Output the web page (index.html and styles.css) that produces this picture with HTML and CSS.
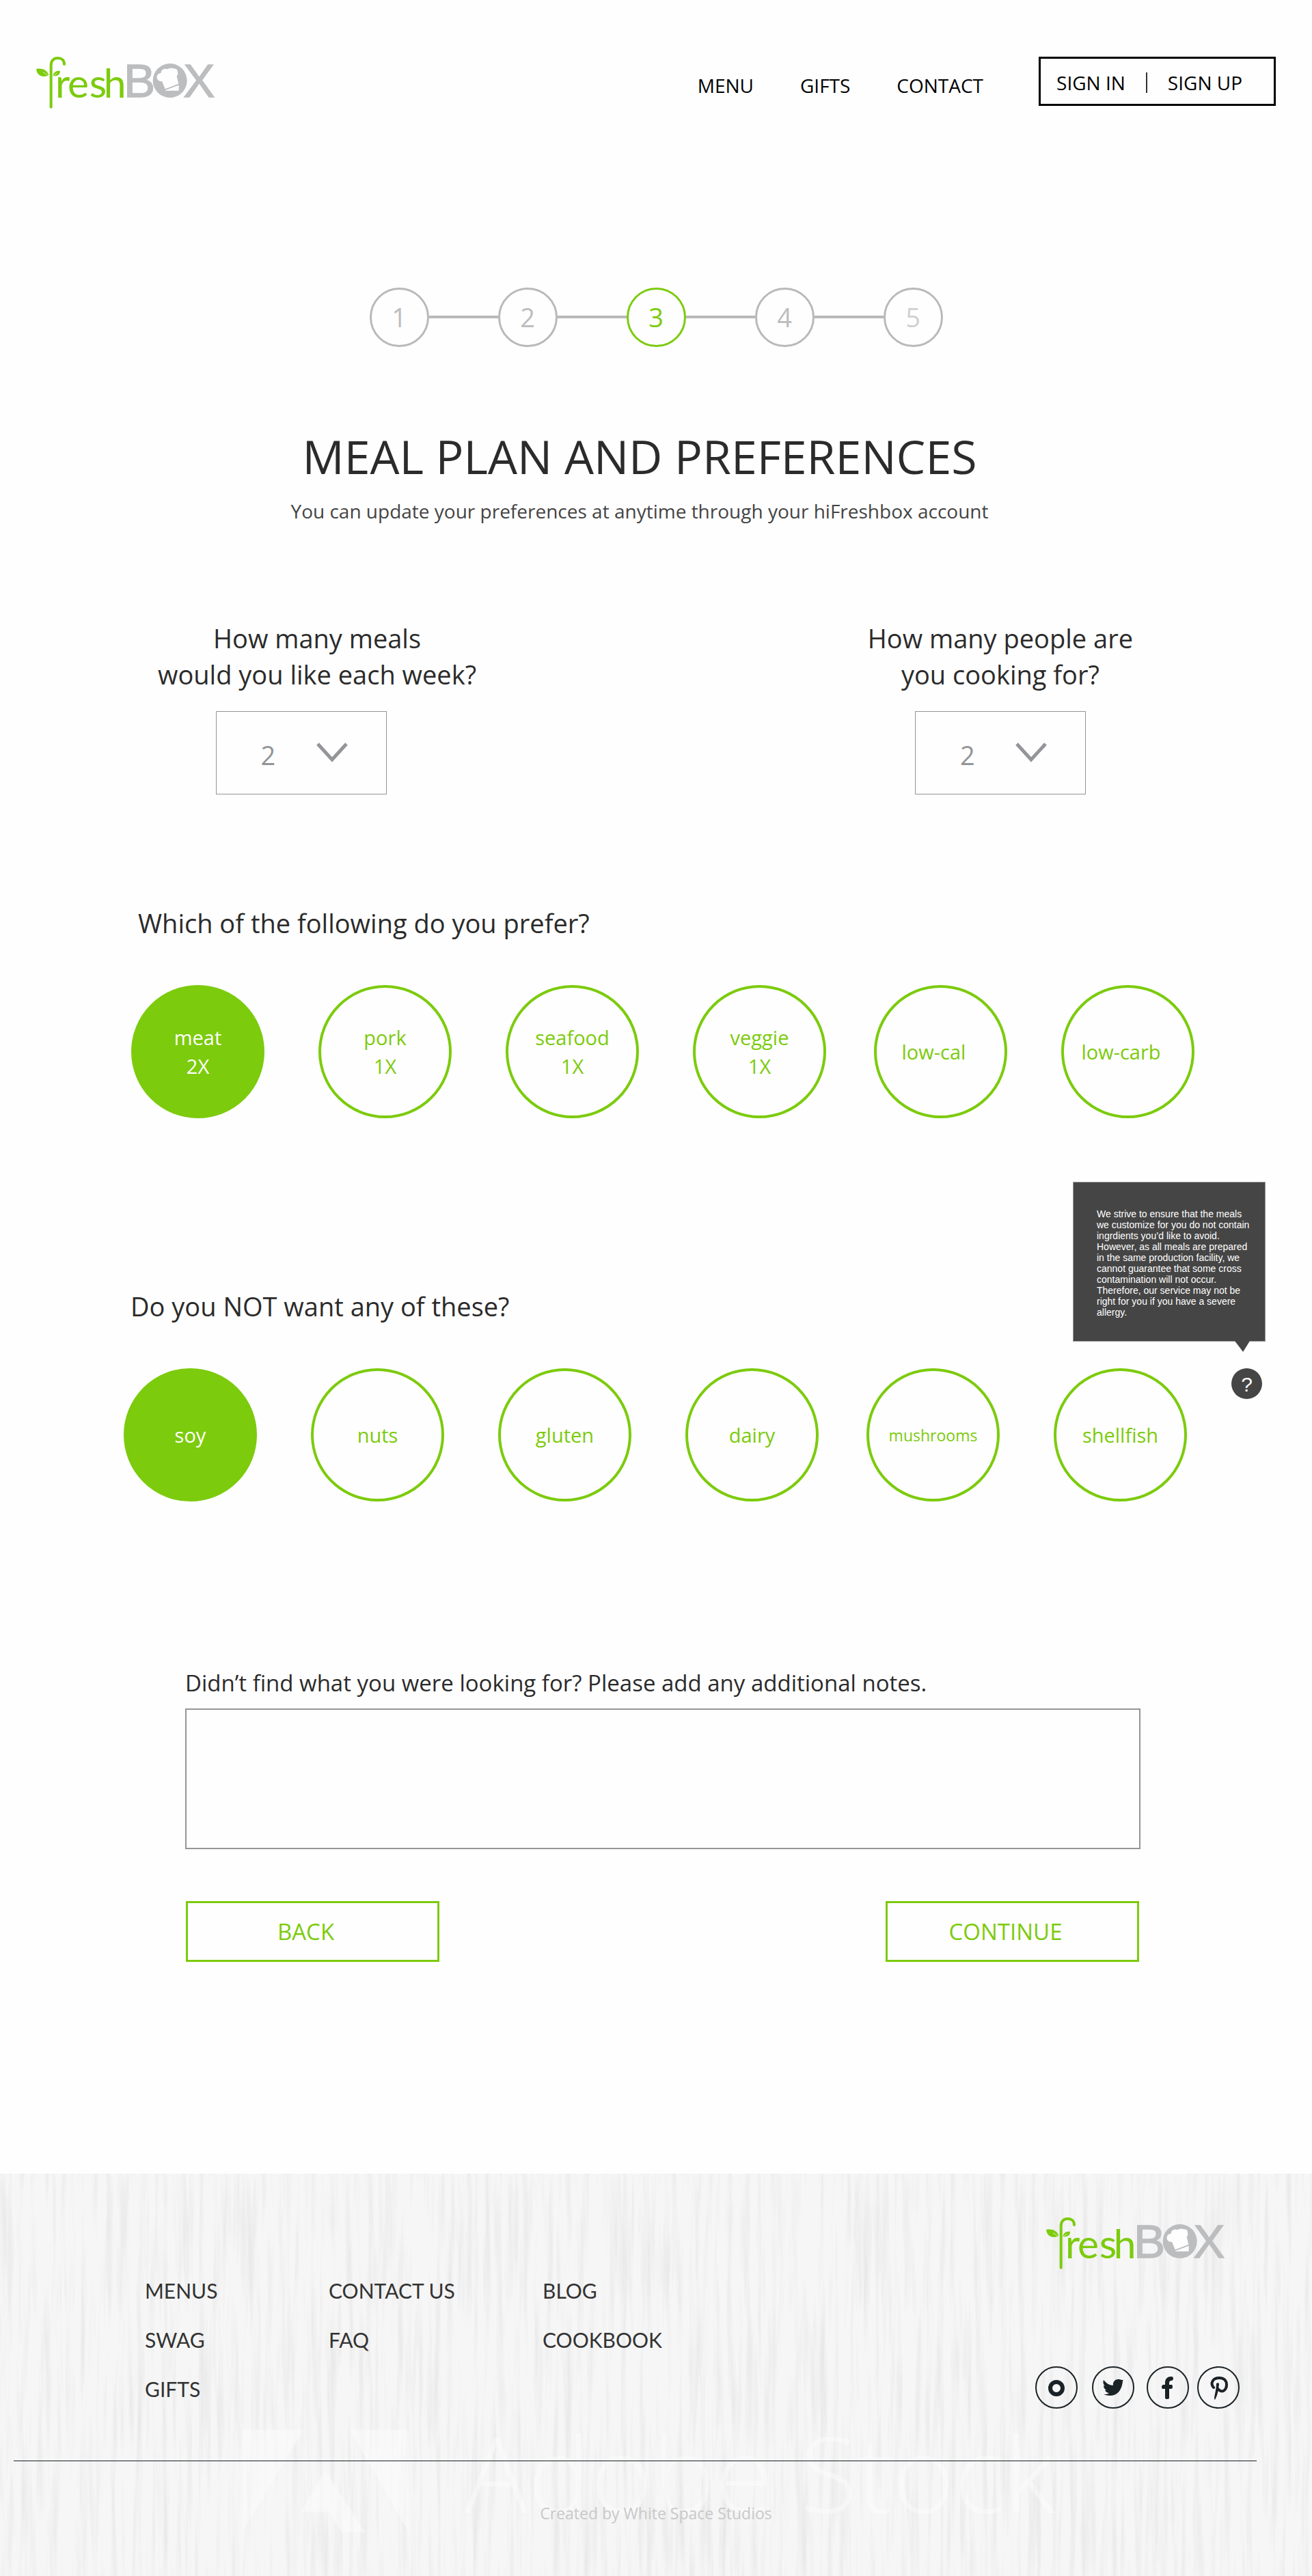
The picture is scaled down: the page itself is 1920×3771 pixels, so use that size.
FILE: index.html
```html
<!DOCTYPE html>
<html lang="en">
<head>
<meta charset="utf-8">
<meta name="viewport" content="width=device-width, initial-scale=1">
<title>freshBOX – Meal plan and preferences</title>
<link rel="stylesheet" href="styles.css">
</head>
<body>

<svg class="sprite" aria-hidden="true">
  <symbol id="logo" viewBox="0 -24 792 252">
    <!-- stem and leaves -->
    <path class="logo-stem" d="M65 221V38C65 16 78 6 95 6C111 6 123 15 123 33"/>
    <path class="logo-leaf" d="M0 54C25 49 49 58 55 82C34 91 5 90 0 54Z"/>
    <path class="logo-leaf" d="M105 63C90 60 74 68 74 84C90 88 105 80 105 63Z"/>
    <path class="logo-vein" d="M30 68L54 84M92 72L76 84"/>
    <text class="logo-fresh" x="84 138 233 296" y="181">resh</text>
    <text class="logo-box" x="384" y="178">B</text>
    <!-- chef hat badge -->
    <circle class="logo-badge" cx="587" cy="105" r="75"/>
    <path class="logo-hat" d="M530 94C528 80 537 72 548 72C548 56 562 50 576 55C588 49 600 50 606 53C617 51 622 60 621 69C625 76 618 84 617 86L625 119L566 142L552 107C540 110 532 103 530 94Z"/>
    <path class="logo-hat" d="M626 125V149H567V147Z"/>
    <text class="logo-box" x="646" y="178">X</text>
  </symbol>
</svg>

<header class="site-header">
  <a class="logo" href="#" aria-label="freshBOX home"><svg><use href="#logo"/></svg></a>
  <nav class="main-nav">
    <a href="#">MENU</a>
    <a href="#">GIFTS</a>
    <a href="#">CONTACT</a>
  </nav>
  <div class="auth">
    <a href="#">SIGN IN</a>
    <span class="auth-divider"></span>
    <a href="#">SIGN UP</a>
  </div>
</header>

<main>
  <ol class="steps">
    <li>1</li>
    <li>2</li>
    <li class="current" aria-current="step">3</li>
    <li>4</li>
    <li class="last">5</li>
  </ol>

  <div class="intro">
    <h1>MEAL PLAN AND PREFERENCES</h1>
    <p>You can update your preferences at anytime through your hiFreshbox account</p>
  </div>

  <form>
    <div class="counts">
      <div class="count meals">
        <label for="meals">How many meals<br>would you like each week?</label>
        <div class="picker">
          <select id="meals"><option>2</option><option>3</option><option>4</option></select>
          <svg viewBox="0 0 46 30" aria-hidden="true"><path d="M2 2L23 25L44 2"/></svg>
        </div>
      </div>
      <div class="count">
        <label for="people">How many people are<br>you cooking for?</label>
        <div class="picker">
          <select id="people"><option>2</option><option>4</option></select>
          <svg viewBox="0 0 46 30" aria-hidden="true"><path d="M2 2L23 25L44 2"/></svg>
        </div>
      </div>
    </div>

    <fieldset class="prefer">
      <legend>Which of the following do you prefer?</legend>
      <div class="choices">
        <div class="group">
          <label class="choice"><input type="checkbox" checked><span>meat<br>2X</span></label>
          <label class="choice"><input type="checkbox"><span>pork<br>1X</span></label>
          <label class="choice"><input type="checkbox"><span>seafood<br>1X</span></label>
          <label class="choice"><input type="checkbox"><span>veggie<br>1X</span></label>
        </div>
        <div class="group diet">
          <label class="choice"><input type="checkbox"><span>low-cal</span></label>
          <label class="choice"><input type="checkbox"><span>low-carb</span></label>
        </div>
      </div>
    </fieldset>

    <fieldset class="avoid">
      <legend>Do you NOT want any of these?</legend>
      <div class="choices">
        <div class="group">
          <label class="choice"><input type="checkbox" checked><span>soy</span></label>
          <label class="choice"><input type="checkbox"><span>nuts</span></label>
          <label class="choice"><input type="checkbox"><span>gluten</span></label>
          <label class="choice"><input type="checkbox"><span>dairy</span></label>
        </div>
        <div class="group">
          <label class="choice small"><input type="checkbox"><span>mushrooms</span></label>
          <label class="choice"><input type="checkbox"><span>shellfish</span></label>
        </div>
        <div class="help">
          <button type="button" aria-describedby="allergy-note">?</button>
          <p class="tooltip" id="allergy-note" role="tooltip">We strive to ensure that the meals we customize for you do not contain ingrdients you’d like to avoid. However, as all meals are prepared in the same production facility, we cannot guarantee that some cross contamination will not occur. Therefore, our service may not be right for you if you have a severe allergy.</p>
        </div>
      </div>
    </fieldset>

    <div class="notes">
      <label for="notes">Didn’t find what you were looking for? Please add any additional notes.</label>
      <textarea id="notes"></textarea>
      <div class="actions">
        <button type="button">BACK</button>
        <button type="submit">CONTINUE</button>
      </div>
    </div>
  </form>
</main>

<footer class="site-footer">
  <svg class="wood" aria-hidden="true">
    <filter id="grain" x="0" y="0" width="100%" height="100%" color-interpolation-filters="sRGB">
      <feTurbulence type="fractalNoise" baseFrequency="0.11 0.005" numOctaves="4" seed="8"/>
      <feColorMatrix values="0 0 0 0 0.4  0 0 0 0 0.4  0 0 0 0 0.4  0.22 0 0 0 -0.1"/>
    </filter>
    <rect width="100%" height="100%" filter="url(#grain)"/>
    <g class="watermark">
      <path d="M355 375H444L355 524ZM512 375H598V524ZM476 434L534 525H500L482 495H440Z"/>
      <text x="680" y="497">Adobe Stock</text>
    </g>
  </svg>
  <div class="footer-main">
    <nav class="footer-nav">
      <ul>
        <li><a href="#">MENUS</a></li>
        <li><a href="#">SWAG</a></li>
        <li><a href="#">GIFTS</a></li>
      </ul>
      <ul>
        <li><a href="#">CONTACT US</a></li>
        <li><a href="#">FAQ</a></li>
      </ul>
      <ul>
        <li><a href="#">BLOG</a></li>
        <li><a href="#">COOKBOOK</a></li>
      </ul>
    </nav>
    <div class="footer-side">
      <a class="logo" href="#" aria-label="freshBOX home"><svg><use href="#logo"/></svg></a>
      <div class="social">
        <a href="#" aria-label="Instagram"><svg viewBox="0 0 62 62"><circle class="ring" cx="31" cy="31" r="30"/><circle class="lens" cx="31" cy="32" r="9"/></svg></a>
        <a href="#" aria-label="Twitter"><svg viewBox="0 0 62 62"><circle class="ring" cx="31" cy="31" r="30"/><path d="M17 20C21 25 26 28 31 28C30 23 34 19 38 19C40 19 42 19 43 20L46 20C45 21 45 21 45 22C44 33 38 43 27 43C23 43 20 42 17 41C20 41 23 41 25 39C22 39 20 37 19 35H21C18 33 17 31 17 28L19 29C16 26 16 23 17 20Z"/></svg></a>
        <a href="#" aria-label="Facebook"><svg viewBox="0 0 62 62"><circle class="ring" cx="31" cy="31" r="30"/><path d="M27 46V33H23Q22 33 22 30Q22 28 24 27H27V24C27 18 31 15 36 15Q39 15 39 18Q39 20 37 21C34 21 33 22 33 25V27H37Q38 28 38 30Q38 33 36 33H33V46Q33 48 30 48Q27 48 27 46Z"/></svg></a>
        <a href="#" aria-label="Pinterest"><svg viewBox="0 0 62 62"><circle class="ring" cx="31" cy="31" r="30"/><path class="pin" d="M24 31C19 26 22 17 32 17C39 17 43 21 43 27C43 34 38 38 34 36C32 35 31 34 30 33"/><path d="M28 25Q32 23 32 26C31 35 30 42 26 49Q25 49 25 46C26 39 28 33 28 25Z"/></svg></a>
      </div>
    </div>
  </div>
  <hr>
  <p class="credit">Created by White Space Studios</p>
</footer>

</body>
</html>
```

FILE: styles.css
```css
:root {
  --green: #7ccb0d;
  --ink: #2b2b2b;
  --grey: #939598;
  --line: #b9b9b9;
  --dark: #454545;
  --night: #1a2226;
}

* { box-sizing: border-box; }

body {
  margin: 0;
  background: #fefefe;
  color: var(--ink);
  font-family: "Segoe UI", "Open Sans", "Noto Sans", sans-serif;
}

a { color: inherit; text-decoration: none; }
button, select, textarea { font: inherit; }
.sprite { position: absolute; width: 0; height: 0; }

/* Logo */
.logo { display: block; flex: none; width: 264px; height: 84px; margin-top: -8px; }
.logo svg { display: block; width: 100%; height: 100%; overflow: visible; }
.logo-stem { fill: none; stroke: var(--green); stroke-width: 12; stroke-linecap: round; }
.logo-leaf { fill: var(--green); }
.logo-vein { fill: none; stroke: #fff; stroke-width: 2; }
.logo-fresh { font-family: Lato, sans-serif; font-size: 176px; fill: var(--green); }
.logo-box {
  font-family: "Liberation Sans", Arial, sans-serif;
  font-size: 208px;
  fill: #bcbdbf;
  stroke: #bcbdbf;
  stroke-width: 4;
}
.logo-badge { fill: #bcbdbf; }
.logo-hat { fill: #fefefe; }

/* Header */
.site-header {
  display: flex;
  align-items: flex-start;
  padding: 83px 53px 0;
  color: #000;
  font-size: 28px;
}
.main-nav {
  display: flex;
  gap: 68px;
  margin-left: auto;
  line-height: 84px;
}
.auth {
  display: flex;
  align-items: center;
  gap: 30px;
  height: 72px;
  margin-left: 81px;
  padding: 4px 46px 0 23px;
  border: 3px solid #000;
}
.auth-divider { width: 2px; height: 30px; background: #333; }

/* Progress */
.steps {
  display: flex;
  justify-content: center;
  gap: 101px;
  margin: 254px 0 0;
  padding: 0;
  list-style: none;
  color: #bdbdbd;
  font-size: 38px;
}
.steps li {
  position: relative;
  width: 87px;
  height: 87px;
  border: 3px solid var(--line);
  border-radius: 50%;
  line-height: 81px;
  text-align: center;
}
.steps li + li::before {
  content: "";
  position: absolute;
  top: 38px;
  right: 100%;
  width: 101px;
  margin-right: 3px;
  height: 4px;
  background: var(--line);
}
.steps .current { border-color: var(--green); color: var(--green); }
.steps .last { color: #d0d0d0; }

/* Intro */
.intro { margin-top: 115px; padding-right: 48px; text-align: center; }
h1 { margin: 0; font-size: 68px; font-weight: 400; line-height: 90px; }
.intro p { margin: 15px 0 0; color: #444; font-size: 28px; line-height: 40px; }

/* Meal and people counts */
.counts {
  display: flex;
  justify-content: space-between;
  margin-top: 140px;
  padding: 0 262px 0 231px;
  font-size: 38px;
  line-height: 53px;
  text-align: center;
}
.count { display: grid; justify-items: center; gap: 27px; }
.picker { position: relative; width: 250px; height: 122px; }
.meals .picker { margin-right: 47px; }
.picker select {
  width: 100%;
  height: 100%;
  padding: 6px 0 0 65px;
  border: 1px solid var(--grey);
  border-radius: 0;
  background: transparent;
  color: var(--grey);
  appearance: none;
}
.picker svg {
  position: absolute;
  top: 46px;
  right: 57px;
  width: 46px;
  height: 30px;
  fill: none;
  stroke: var(--grey);
  stroke-width: 5;
  pointer-events: none;
}

/* Round choices */
fieldset { min-width: 0; margin: 0; padding: 0; border: 0; }
.prefer { margin-top: 162px; padding-left: 192px; }
.avoid { margin-top: 249px; padding-left: 181px; }
legend { margin-bottom: 64px; padding: 0 10px; font-size: 38px; line-height: 53px; }
.choices { display: flex; align-items: flex-start; }
.group { display: flex; gap: 79px; }
.group + .group { margin-left: 70px; }
.choice {
  position: relative;
  display: grid;
  place-items: center;
  width: 195px;
  height: 195px;
  border: 4px solid var(--green);
  border-radius: 50%;
  color: var(--green);
  font-size: 29px;
  line-height: 42px;
  text-align: center;
}
.choice:has(:checked) { background: var(--green); color: #fff; }
.choice input { position: absolute; inset: 0; margin: 0; opacity: 0; }
.diet .choice { padding-right: 20px; }
.choice.small { font-size: 23px; }

/* Allergy help */
.help { position: relative; margin-left: 65px; }
.help button {
  display: block;
  width: 45px;
  height: 45px;
  padding: 3px 0 0;
  border: 0;
  border-radius: 50%;
  background: var(--dark);
  color: #fff;
  font-family: "Liberation Sans", Arial, sans-serif;
  font-size: 30px;
  line-height: 42px;
}
.tooltip {
  position: absolute;
  right: -5px;
  bottom: calc(100% + 39px);
  width: 282px;
  height: 234px;
  margin: 0;
  padding: 38px 19px 0 34px;
  border: 1px solid #999;
  background: var(--dark);
  color: #fff;
  font-family: "Liberation Sans", Arial, sans-serif;
  font-size: 14px;
  line-height: 16px;
}
.tooltip::after {
  content: "";
  position: absolute;
  top: 100%;
  right: 22px;
  width: 22px;
  height: 16px;
  background: var(--dark);
  clip-path: polygon(0 0, 100% 0, 55% 100%);
}

/* Notes */
.notes { margin-top: 243px; padding: 0 251px 0 271px; font-size: 33px; line-height: 46px; }
.notes label { display: block; }
.notes textarea {
  display: block;
  width: 100%;
  height: 206px;
  margin-top: 14px;
  padding: 16px;
  border: 2px solid var(--grey);
  background: transparent;
  resize: none;
}
.actions { display: flex; justify-content: space-between; margin: 76px 2px 0 1px; }
.actions button {
  width: 371px;
  height: 89px;
  padding: 0 20px 0 0;
  border: 3px solid var(--green);
  background: transparent;
  color: var(--green);
}

/* Footer */
.site-footer {
  position: relative;
  margin-top: 310px;
  padding-bottom: 75px;
  background: #f6f6f6;
}
.wood { position: absolute; inset: 0; width: 100%; height: 100%; }
.watermark { fill: #fff; opacity: 0.4; }
.watermark text { font-size: 154px; font-weight: 300; }
.footer-main {
  position: relative;
  display: flex;
  justify-content: space-between;
  padding: 64px 106px 0 212px;
}
.footer-nav {
  display: grid;
  grid-template-columns: 269px 313px auto;
  padding-top: 71px;
  color: #333;
  font-family: Lato, sans-serif;
  font-size: 30px;
  line-height: 72px;
}
.footer-nav ul { margin: 0; padding: 0; list-style: none; }
.footer-side { display: grid; justify-items: end; align-content: start; gap: 142px; }
.footer-side .logo { margin-right: 19px; }
.social { display: grid; grid-template-columns: 83px 80px 74px 62px; }
.social svg { display: block; width: 62px; height: 62px; fill: var(--night); }
.social .ring { fill: none; stroke: var(--night); stroke-width: 2; }
.social .lens { fill: none; stroke: var(--night); stroke-width: 6; }
.social .pin { fill: none; stroke: var(--night); stroke-width: 4; stroke-linecap: round; }
hr {
  position: relative;
  height: 1px;
  margin: 69px 81px 0 20px;
  border: 0;
  background: var(--night);
}
.credit {
  position: relative;
  margin: 59px 0 0;
  color: #c8c8c8;
  font-size: 23px;
  line-height: 34px;
  text-align: center;
}
```
